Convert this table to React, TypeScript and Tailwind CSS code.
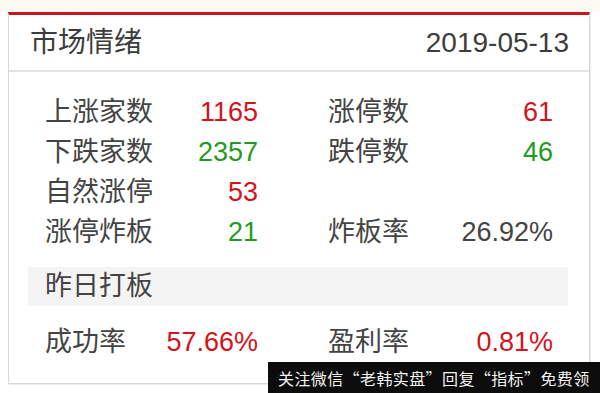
import React from "react";

const red = "text-[#d2141c]";
const green = "text-[#239a23]";

const rows = [
  { l: "上涨家数", v: "1165", c: red, r: "涨停数", rv: "61", rc: red },
  { l: "下跌家数", v: "2357", c: green, r: "跌停数", rv: "46", rc: green },
  { l: "自然涨停", v: "53", c: red, r: "", rv: "", rc: "" },
  { l: "涨停炸板", v: "21", c: green, r: "炸板率", rv: "26.92%", rc: "text-[#444]" },
];

const App = () => {
  return (
    <div
      className="relative w-[600px] h-[393px] overflow-hidden bg-white"
      style={{ fontFamily: '"Liberation Sans", "Noto Sans CJK SC", sans-serif' }}
    >
      {/* faint strip above the card */}
      <div className="h-[12px] bg-[#fdfaf3]"></div>

      {/* Card */}
      <div className="ml-[8px] w-[582px] border-x border-b border-[#d8d8d8] border-t-[3px] border-t-[#c9161e] shadow-[1px_1px_0_#ececec]">
        {/* Header */}
        <div className="h-[57px] flex items-center justify-between pl-[21px] pr-[20px] border-b-2 border-[#e2e2e2] text-[28px] text-[#3c3c3c]">
          <span>市场情绪</span>
          <span>2019-05-13</span>
        </div>

        {/* Body */}
        <div className="pt-[20px] pb-[21px] px-[36px] text-[27px] text-[#444]">
          <div className="grid grid-cols-[213px_225px] gap-x-[70px]">
            {rows.map((row) => (
              <React.Fragment key={row.l}>
                <div className="h-[40px] flex items-center justify-between">
                  <span>{row.l}</span>
                  <span className={row.c}>{row.v}</span>
                </div>
                <div className="h-[40px] flex items-center justify-between">
                  <span>{row.r}</span>
                  <span className={row.rc}>{row.rv}</span>
                </div>
              </React.Fragment>
            ))}
          </div>

          {/* Yesterday section */}
          <div className="mt-[15px] -ml-[17px] -mr-[15px] h-[39px] flex items-center pl-[17px] bg-[#f4f4f4]">
            昨日打板
          </div>

          <div className="mt-[16px] grid grid-cols-[213px_225px] gap-x-[70px]">
            <div className="h-[40px] flex items-center justify-between">
              <span>成功率</span>
              <span className={red}>57.66%</span>
            </div>
            <div className="h-[40px] flex items-center justify-between">
              <span>盈利率</span>
              <span className={red}>0.81%</span>
            </div>
          </div>
        </div>
      </div>

      {/* Watermark */}
      <div
        className="absolute left-[268px] top-[362px] w-[332px] h-[31px] bg-[#0c0c0c] text-[#f2f2f2] text-[16px] tracking-[0.4px] flex items-center pl-[10px] whitespace-nowrap overflow-hidden"
        style={{ fontFamily: '"Noto Sans CJK SC", sans-serif' }}
      >
        关注微信“老韩实盘”回复“指标”免费领
      </div>
    </div>
  );
};

export default App;
